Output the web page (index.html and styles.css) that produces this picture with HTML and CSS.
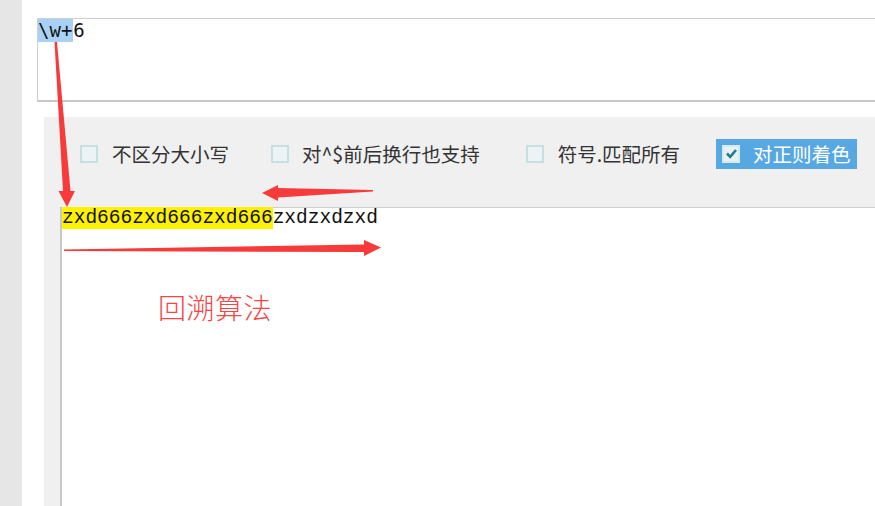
FILE: index.html
```html
<!DOCTYPE html>
<html lang="zh">
<head>
<meta charset="utf-8">
<link rel="stylesheet" href="styles.css">
</head>
<body>
<div class="app">
  <div class="sidebar"></div>
  <div class="main">
    <div class="regex-input"><span class="sel">\w+</span>6</div>
    <div class="panel">
      <div class="options">
        <label class="opt opt-case"><span class="box"></span><span class="txt">不区分大小写</span></label>
        <label class="opt opt-multiline"><span class="box"></span><span class="txt">对^$前后换行也支持</span></label>
        <label class="opt opt-dotall"><span class="box"></span><span class="txt">符号.匹配所有</span></label>
        <label class="opt active"><span class="box checked"><svg viewBox="0 0 17 17" width="17" height="17"><path d="M4 8.5 L7.2 11.8 L13 5" fill="none" stroke="#1b7e93" stroke-width="2.6"/></svg></span><span class="txt">对正则着色</span></label>
      </div>
      <div class="editor"><span class="match">zxd666zxd666zxd666</span>zxdzxdzxd</div>
    </div>
  </div>
  <svg class="annot" width="875" height="506" viewBox="0 0 875 506">
    <polygon points="54.5,42 57,42 70.5,191 75,191 67,207 58.5,191 63,191" fill="#f73b3b"/>
    <polygon points="373,190 373,191.5 278,197.5 278,201 262,193 278,185 278,188" fill="#f73b3b"/>
    <polygon points="64,249.5 364,244.5 364,240 381,247.5 364,256 364,252 64,251" fill="#f73b3b"/>
  </svg>
  <div class="note">回溯算法</div>
</div>
</body>
</html>
```
FILE: styles.css
```css
html, body {
  margin: 0;
  padding: 0;
  background: #fff;
  overflow: hidden;
}
.app {
  position: relative;
  display: flex;
  width: 875px;
  height: 506px;
  overflow: hidden;
}
.sidebar {
  width: 22px;
  flex: none;
  background: #e6e6e6;
}
.main {
  flex: 1;
  display: flex;
  flex-direction: column;
  padding: 18px 0 0 15px;
  min-width: 0;
}
.regex-input {
  height: 81px;
  margin-right: -20px;
  border-top: 1px solid #cfcfcf;
  border-left: 1px solid #cfcfcf;
  border-bottom: 2px solid #c8c8c8;
  font-family: "DejaVu Sans Mono", monospace;
  font-size: 19px;
  line-height: 23px;
  color: #111;
}
.sel {
  background: #a9d1f6;
  display: inline-block;
  padding-right: 1px;
}
.panel {
  flex: 1;
  margin: 15px -20px 0 7px;
  background: #f0f0f0;
  display: flex;
  flex-direction: column;
}
.options {
  display: flex;
  align-items: center;
  padding: 22px 0 0 36px;
  height: 30px;
  font-family: "Noto Sans CJK SC", "Microsoft YaHei", sans-serif;
  font-size: 19.5px;
  color: #333;
}
.opt {
  display: flex;
  align-items: center;
  height: 30px;
  flex: none;
}
.opt-case { margin-right: 42px; }
.opt-multiline { margin-right: 46px; }
.opt-dotall { margin-right: 36px; }
.opt .txt {
  margin-left: 14px;
  line-height: 30px;
  white-space: nowrap;
}
.opt-multiline .txt { margin-left: 13px; }
.box {
  width: 14px;
  height: 14px;
  border: 2px solid #c6dfe3;
  background: #ebf3f5;
  flex: none;
}
.box svg {
  display: block;
  margin: -2px 0 0 -1.5px;
}
.opt.active {
  background: #57a8e2;
  color: #fff;
  padding: 0 6px;
}
.opt.active .txt {
  margin-left: 13px;
}
.box.checked {
  background: #e8f2f4;
  border-color: #d8eaee;
}
.editor {
  flex: 1;
  margin: 38px 0 0 16px;
  background: #fff;
  border-top: 1px solid #cfcfcf;
  border-left: 2px solid #c8c8c8;
  font-family: "Liberation Mono", "Courier New", monospace;
  font-size: 19.5px;
  line-height: 21px;
  color: #111;
}
.match {
  background: #fff200;
}
.annot {
  position: absolute;
  left: 0;
  top: 0;
  pointer-events: none;
}
.note {
  position: absolute;
  left: 158px;
  top: 287px;
  font-family: "Noto Sans CJK SC", serif;
  font-weight: 300;
  font-size: 28px;
  color: #f54545;
  letter-spacing: 0.5px;
}
```
